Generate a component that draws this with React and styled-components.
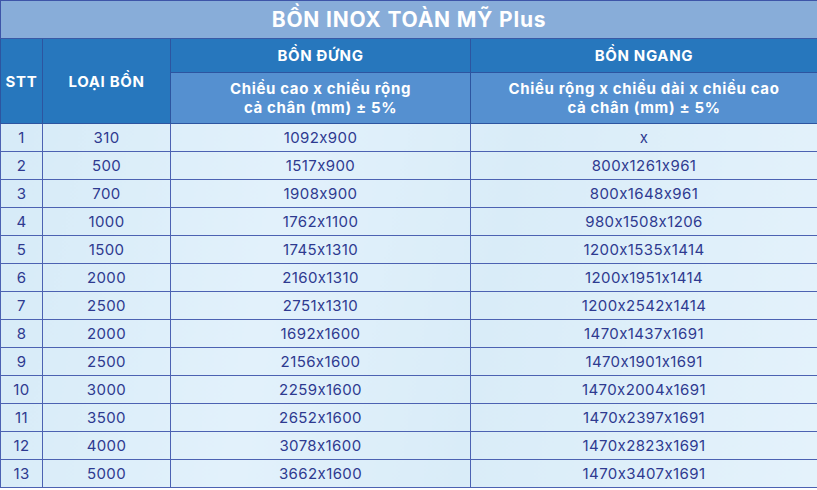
import React from "react";
import styled, {createGlobalStyle} from "styled-components";

const GlobalStyle = createGlobalStyle`
  body {
    margin: 0;
    background: #ffffff;
    font-family: Inter, Roboto, "Liberation Sans", sans-serif;
    font-feature-settings: "calt" 0;
  }
`

const Table = styled.table`
  width: 817px;
  border-collapse: collapse;
  table-layout: fixed;
  border: 1px solid #3e55a8;
  background: linear-gradient(100deg, #d5eaf7 0%, #e2f1fb 35%, #d9ecf8 60%, #e4f2fb 100%);
`

const TitleCell = styled.th`
  height: 37px;
  padding: 0;
  background: #88add9;
  color: #ffffff;
  font-size: 21px;
  font-weight: 700;
  letter-spacing: 0.8px;
  border-bottom: 1px solid #3a5aa6;
`

const HeadCell = styled.th`
  padding: 0;
  background: ${p => p.$light ? "#5590d0" : "#2777bd"};
  color: #ffffff;
  font-size: 15px;
  font-weight: 700;
  letter-spacing: 0.65px;
  line-height: 19px;
  border: 1px solid #2d55a0;
  height: ${p => p.$h}px;
`

const Cell = styled.td`
  height: 27px;
  padding: 0;
  text-align: center;
  color: #2e3a90;
  font-size: 15px;
  letter-spacing: 0.4px;
  border: 1px solid #4c62b2;
  border-top: 1px solid #5a6fba;
`

const rows = [
    ["1", "310", "1092x900", "x"],
    ["2", "500", "1517x900", "800x1261x961"],
    ["3", "700", "1908x900", "800x1648x961"],
    ["4", "1000", "1762x1100", "980x1508x1206"],
    ["5", "1500", "1745x1310", "1200x1535x1414"],
    ["6", "2000", "2160x1310", "1200x1951x1414"],
    ["7", "2500", "2751x1310", "1200x2542x1414"],
    ["8", "2000", "1692x1600", "1470x1437x1691"],
    ["9", "2500", "2156x1600", "1470x1901x1691"],
    ["10", "3000", "2259x1600", "1470x2004x1691"],
    ["11", "3500", "2652x1600", "1470x2397x1691"],
    ["12", "4000", "3078x1600", "1470x2823x1691"],
    ["13", "5000", "3662x1600", "1470x3407x1691"],
];

const App = () => {
    return (
        <>
            <GlobalStyle/>
            <Table>
                <colgroup>
                    <col style={{width: 42}}/>
                    <col style={{width: 128}}/>
                    <col style={{width: 300}}/>
                    <col style={{width: 347}}/>
                </colgroup>
                <thead>
                <tr>
                    <TitleCell colSpan={4}>BỒN INOX TOÀN MỸ Plus</TitleCell>
                </tr>
                <tr>
                    <HeadCell rowSpan={2}>STT</HeadCell>
                    <HeadCell rowSpan={2}>LOẠI BỒN</HeadCell>
                    <HeadCell $h={33}>BỒN ĐỨNG</HeadCell>
                    <HeadCell $h={33}>BỒN NGANG</HeadCell>
                </tr>
                <tr>
                    <HeadCell $light $h={50}>Chiều cao x chiều rộng<br/>cả chân (mm) ± 5%</HeadCell>
                    <HeadCell $light $h={50}>Chiều rộng x chiều dài x chiều cao<br/>cả chân (mm) ± 5%</HeadCell>
                </tr>
                </thead>
                <tbody>
                {rows.map(row => (
                    <tr key={row[0]}>
                        {row.map((value, i) => <Cell key={i}>{value}</Cell>)}
                    </tr>
                ))}
                </tbody>
            </Table>
        </>
    )
}

export default App
